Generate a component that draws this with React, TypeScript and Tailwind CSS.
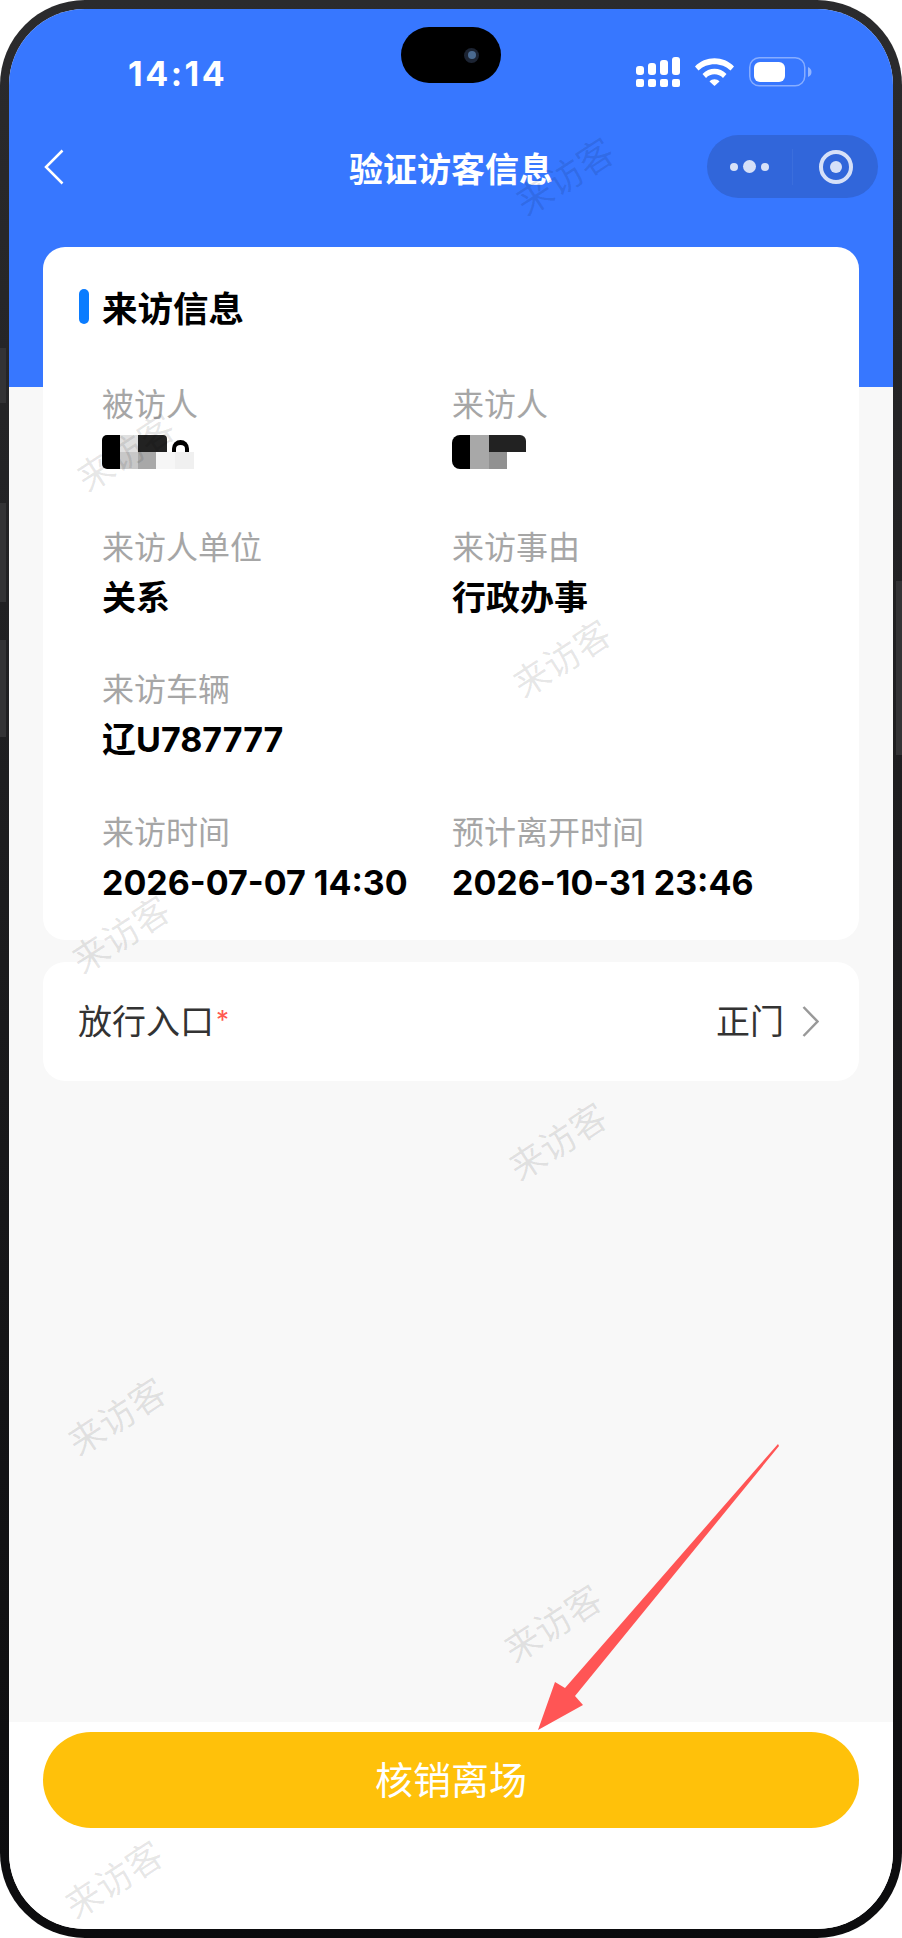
const cjk = "font-['Inter','Noto_Sans_CJK_SC',sans-serif]"

const watermarks = [
  { x: 565, y: 177 },
  { x: 126, y: 453 },
  { x: 562, y: 659 },
  { x: 121, y: 935 },
  { x: 558, y: 1142 },
  { x: 117, y: 1417 },
  { x: 553, y: 1624 },
  { x: 114, y: 1880 },
]

function StatusIcons() {
  return (
    <svg width="176" height="30" viewBox="0 0 176 30" fill="#fff">
      <rect x="0" y="22" width="8" height="8" rx="2" />
      <rect x="12" y="22" width="8" height="8" rx="2" />
      <rect x="24" y="22" width="8" height="8" rx="2" />
      <rect x="36" y="22" width="8" height="8" rx="2" />
      <rect x="0" y="9" width="8" height="9" rx="3" />
      <rect x="12" y="6" width="8" height="12" rx="3" />
      <rect x="24" y="3" width="8" height="15" rx="3" />
      <rect x="36" y="0" width="8" height="18" rx="3" />
      <path d="M59 9.5C69 -1.5 88 -1.5 98 9.5L94.500 13.500C86 5 71 5 62.500 13.500Z" />
      <path d="M66.500 17C73 10 84 10 90.500 17L87 21C82.500 16 74.500 16 70 21Z" />
      <path d="M73.500 24.500C76 21.500 81 21.500 83.500 24.500L78.500 29Z" />
      <rect x="113.750" y="0.750" width="55" height="28" rx="9.500" fill="none" stroke="#fff" strokeOpacity="0.4" strokeWidth="1.500" />
      <rect x="118" y="5" width="31" height="20" rx="6" />
      <path d="M172 10C174.500 11 175.500 13 175.500 15C175.500 17 174.500 19 172 20Z" fillOpacity="0.45" />
    </svg>
  )
}

function Capsule() {
  return (
    <div className="flex h-[63px] w-[171px] items-center rounded-full bg-[#3166da]">
      <div className="flex flex-1 items-center justify-center gap-[5px]">
        <span className="h-[8px] w-[8px] rounded-full bg-white/80" />
        <span className="h-[13px] w-[13px] rounded-full bg-white/80" />
        <span className="h-[8px] w-[8px] rounded-full bg-white/80" />
      </div>
      <div className="h-[36px] w-px bg-white/5" />
      <div className="flex w-[85px] items-center justify-center">
        <div className="flex h-[34px] w-[34px] items-center justify-center rounded-full border-[4px] border-white/80">
          <span className="h-[12px] w-[12px] rounded-full bg-white/80" />
        </div>
      </div>
    </div>
  )
}

function Field({ label, value, children }: { label: string; value?: string; children?: React.ReactNode }) {
  return (
    <div className="h-[142.500px]">
      <div className="text-[32px] leading-[44px] text-[#a6a6a6]">{label}</div>
      {value && <div className="mt-[6px] text-[34px] leading-[44px] font-bold text-black">{value}</div>}
      {children}
    </div>
  )
}

export default function App() {
  return (
    <div className={`relative h-[1938px] w-[902px] overflow-hidden bg-white ${cjk}`}>
      <div className="h-full rounded-[85px] bg-gradient-to-b from-[#2b2b2d] to-[#0c0c0e] p-[9px]">
        <div className="flex h-full flex-col overflow-hidden rounded-[76px] bg-[#f8f8f8]">
          <header className="h-[378px] shrink-0 bg-[#3777ff] text-white">
            <div className="flex h-[126px] items-center justify-between pr-[81px] pl-[119px]">
              <span className="mt-[4px] text-[34px] leading-none font-bold tracking-[2.500px]">14:14</span>
              <StatusIcons />
            </div>
            <div className="grid grid-cols-[1fr_auto_1fr] items-center px-[15px]">
              <svg className="ml-[20px]" width="20" height="36" viewBox="0 0 20 36" fill="none" stroke="#fff" strokeWidth="2.500">
                <path d="M18.500 1.500L2 18L18.500 34.500" />
              </svg>
              <span className="mt-[6px] text-[34px] font-bold">验证访客信息</span>
              <div className="justify-self-end">
                <Capsule />
              </div>
            </div>
          </header>

          <main className="-mt-[140px] flex flex-1 flex-col gap-[22px] px-[34px]">
            <section className="h-[693px] rounded-[22px] bg-white pt-[42px]">
              <div className="flex h-[34px] items-center pl-[36px]">
                <span className="h-[35px] w-[10px] rounded-full bg-[#0a7cff]" />
                <h2 className="mt-[7px] ml-[13px] text-[35.500px] font-bold text-black">来访信息</h2>
              </div>
              <div className="mt-[60px] grid grid-cols-[350px_1fr] pl-[59px]">
                <Field label="被访人">
                  <div className="mt-[8px] h-[34px] w-[92px]">
                    <div className="flex h-[17px]">
                      <span className="w-[18px] rounded-tl-[5px] bg-black" />
                      <span className="w-[18px] bg-[#e0e0e0]" />
                      <span className="w-[29px] rounded-tr-[4px] bg-[#222222]" />
                      <span className="mt-[5px] ml-[5px] w-[17px] rounded-t-full border-x-[4px] border-t-[5px] border-black" />
                    </div>
                    <div className="flex h-[17px]">
                      <span className="w-[18px] rounded-bl-[5px] bg-black" />
                      <span className="w-[18px] bg-[#c8c8c8]" />
                      <span className="w-[18px] bg-[#a8a8a8]" />
                      <span className="w-[19px] bg-[#f6f6f6]" />
                      <span className="w-[19px] bg-[#f0f0f0]" />
                    </div>
                  </div>
                </Field>
                <Field label="来访人">
                  <div className="mt-[8px] h-[34px] w-[74px]">
                    <div className="flex h-[17px]">
                      <span className="w-[18px] rounded-tl-[8px] bg-black" />
                      <span className="w-[19px] bg-[#a8a8a8]" />
                      <span className="w-[37px] rounded-tr-[6px] bg-[#222222]" />
                    </div>
                    <div className="flex h-[17px]">
                      <span className="w-[18px] rounded-bl-[8px] bg-black" />
                      <span className="w-[19px] bg-[#a8a8a8]" />
                      <span className="w-[18px] bg-[#919191]" />
                    </div>
                  </div>
                </Field>
                <Field label="来访人单位" value="关系" />
                <Field label="来访事由" value="行政办事" />
                <Field label="来访车辆" value="辽U787777" />
                <div />
                <Field label="来访时间" value="2026-07-07 14:30" />
                <Field label="预计离开时间" value="2026-10-31 23:46" />
              </div>
            </section>

            <section className="flex h-[119px] items-center justify-between rounded-[22px] bg-white pr-[40px] pl-[35px] text-[34px] text-[#333333]">
              <div className="flex items-center">
                放行入口
                <span className="ml-[2px] -translate-y-[2px] text-[26px] text-[#ff5a50]">*</span>
              </div>
              <div className="flex items-center gap-[18px]">
                正门
                <svg width="17" height="31" viewBox="0 0 17 31" fill="none" stroke="#999999" strokeWidth="2.500">
                  <path d="M1.500 1L15.500 15.500L1.500 30" />
                </svg>
              </div>
            </section>
          </main>

          <footer className="h-[207px] shrink-0 bg-white px-[34px] pt-[10px]">
            <button className="h-[96px] w-full rounded-full bg-[#ffc10a] text-[38px] text-white">核销离场</button>
          </footer>
        </div>
      </div>

      {/* side buttons */}
      <span className="absolute top-[348px] left-0 h-[55px] w-[6px] bg-[#333335]" />
      <span className="absolute top-[503px] left-0 h-[99px] w-[6px] bg-[#333335]" />
      <span className="absolute top-[640px] left-0 h-[97px] w-[6px] bg-[#333335]" />
      <span className="absolute top-[581px] right-0 h-[174px] w-[6px] bg-[#333335]" />

      {/* dynamic island */}
      <div className="absolute top-[27px] left-[401px] flex h-[56px] w-[100px] items-center justify-end rounded-full bg-black pr-[22px]">
        <div className="flex h-[15px] w-[15px] items-center justify-center rounded-full bg-[#1c2433]">
          <span className="h-[8px] w-[8px] rounded-full bg-[#4a6a90]" />
        </div>
      </div>

      {/* watermark */}
      {watermarks.map((w) => (
        <span
          key={w.y}
          className="absolute -translate-x-1/2 -translate-y-1/2 -rotate-[33deg] text-[36px] leading-none whitespace-nowrap text-black/10"
          style={{ left: w.x, top: w.y }}
        >
          来访客
        </span>
      ))}

      {/* annotation arrow */}
      <svg className="absolute top-0 left-0" width="902" height="1938" fill="#ff5555">
        <path d="M778 1444L779 1446L575 1696L583 1705L538 1730L555 1682L565 1688Z" />
      </svg>
    </div>
  )
}
